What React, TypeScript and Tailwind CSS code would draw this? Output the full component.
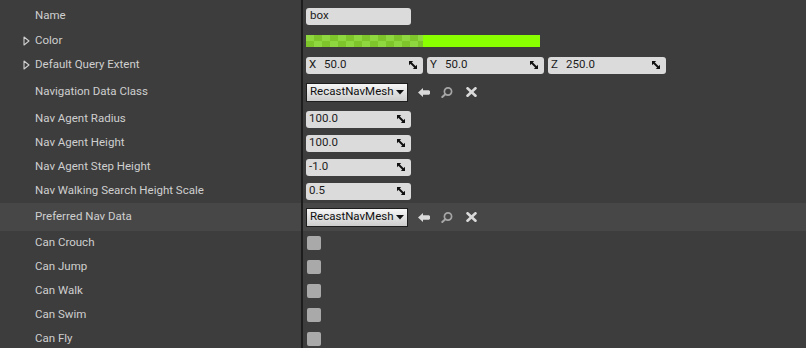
import type { ReactNode } from "react";

const font = { fontFamily: "Roboto, 'Noto Sans', sans-serif" };

function Expander() {
  return (
    <svg width="7" height="10" viewBox="0 0 7 10" className="absolute left-[23px]">
      <polygon points="1,1 6,5 1,9" fill="none" stroke="#cfcfcf" strokeWidth="1.1" strokeLinejoin="round" />
    </svg>
  );
}

function Row({
  label,
  h,
  expandable,
  highlight,
  children,
}: {
  label: string;
  h: string;
  expandable?: boolean;
  highlight?: boolean;
  children?: ReactNode;
}) {
  return (
    <div className={`flex ${h} ${highlight ? "bg-[#474747]" : ""}`}>
      <div className="relative flex w-[301px] shrink-0 items-center pl-[35px] text-[11.5px] text-[#cfcfcf]">
        {expandable && <Expander />}
        {label}
      </div>
      <div className="w-[2px] shrink-0 bg-[#1d1d1d]" />
      <div className="flex flex-1 items-center pl-[3px]">{children}</div>
    </div>
  );
}

function Spin() {
  return (
    <svg width="8" height="8" viewBox="0 0 8 8" className="shrink-0">
      <polygon points="0,0 4.2,0 0,4.2" fill="#111" />
      <polygon points="8,8 8,3.8 3.8,8" fill="#111" />
      <line x1="1" y1="1" x2="7" y2="7" stroke="#111" strokeWidth="2" />
    </svg>
  );
}

function NumField({ value, label, w = "w-[105px]" }: { value: string; label?: string; w?: string }) {
  return (
    <div className={`flex h-[17px] ${w} items-center rounded-[3px] bg-[#dbdbdb] pl-[3px] pr-[6px] text-[11.5px] text-[#1b1b1b]`}>
      {label && <span className="w-[15px]">{label}</span>}
      <span className="flex-1">{value}</span>
      <Spin />
    </div>
  );
}

function ObjectPicker() {
  return (
    <div className="flex items-center">
      <div className="flex h-[19px] w-[102px] items-center border border-[#1e1e1e] bg-gradient-to-b from-[#f6f6f6] to-[#cdcdcd] pl-[3px] pr-[3px] text-[11.5px] text-[#111]">
        <span className="flex-1">RecastNavMesh</span>
        <svg width="8" height="5" viewBox="0 0 8 5">
          <polygon points="0,0 8,0 4,4.5" fill="#111" />
        </svg>
      </div>
      <svg width="12" height="9" viewBox="0 0 12 9" className="ml-[10px]">
        <polygon points="0,4.5 5,0 5,2.3 11,2.3 12,3.3 12,5.7 11,6.7 5,6.7 5,9" fill="#dadada" />
      </svg>
      <svg width="12" height="11" viewBox="0 0 12 11" className="ml-[11px]">
        <circle cx="7" cy="4.5" r="3.6" fill="none" stroke="#a6a6a6" strokeWidth="1.7" />
        <line x1="4.3" y1="7.2" x2="1.3" y2="10" stroke="#a6a6a6" strokeWidth="2" strokeLinecap="round" />
      </svg>
      <svg width="11" height="10" viewBox="0 0 11 10" className="ml-[13px]">
        <line x1="1.5" y1="1.3" x2="9.5" y2="8.7" stroke="#dadada" strokeWidth="2.6" strokeLinecap="round" />
        <line x1="9.5" y1="1.3" x2="1.5" y2="8.7" stroke="#dadada" strokeWidth="2.6" strokeLinecap="round" />
      </svg>
    </div>
  );
}

function Check() {
  return <div className="ml-[1px] h-[14px] w-[14px] rounded-[2px] bg-[#a9a9a9]" />;
}

export default function App() {
  return (
    <div className="h-[348px] w-[806px] overflow-hidden bg-[#3d3d3d]" style={font}>
      <div className="flex h-[4px]">
        <div className="w-[301px]" />
        <div className="w-[2px] bg-[#1d1d1d]" />
      </div>
      <Row label="Name" h="h-[24px]">
        <div className="flex h-[17px] w-[105px] items-center rounded-[3px] bg-[#dbdbdb] pl-[4px] text-[11.5px] text-[#1b1b1b]">
          box
        </div>
      </Row>
      <Row label="Color" h="h-[25px]" expandable>
        <div className="flex h-[12px] w-[234px]">
          <div className="grid h-full w-[117px] grid-cols-[repeat(15,8px)] grid-rows-2 overflow-hidden">
            {Array.from({ length: 30 }).map((_, i) => {
              const r = Math.floor(i / 15);
              const c = i % 15;
              return (
                <div key={i} className={(r + c) % 2 === 0 ? "bg-[#8fd73e]" : "bg-[#7dc52b]"} />
              );
            })}
          </div>
          <div className="flex-1 bg-[#8aff00]" />
        </div>
      </Row>
      <Row label="Default Query Extent" h="h-[24px]" expandable>
        <div className="flex gap-[4px]">
          <NumField label="X" value="50.0" w="w-[117px]" />
          <NumField label="Y" value="50.0" w="w-[117px]" />
          <NumField label="Z" value="250.0" w="w-[118px]" />
        </div>
      </Row>
      <Row label="Navigation Data Class" h="h-[30px]">
        <ObjectPicker />
      </Row>
      <Row label="Nav Agent Radius" h="h-[24px]">
        <NumField value="100.0" />
      </Row>
      <Row label="Nav Agent Height" h="h-[24px]">
        <NumField value="100.0" />
      </Row>
      <Row label="Nav Agent Step Height" h="h-[24px]">
        <NumField value="-1.0" />
      </Row>
      <Row label="Nav Walking Search Height Scale" h="h-[24px]">
        <NumField value="0.5" />
      </Row>
      <Row label="Preferred Nav Data" h="h-[28px]" highlight>
        <ObjectPicker />
      </Row>
      <Row label="Can Crouch" h="h-[24px]">
        <Check />
      </Row>
      <Row label="Can Jump" h="h-[24px]">
        <Check />
      </Row>
      <Row label="Can Walk" h="h-[24px]">
        <Check />
      </Row>
      <Row label="Can Swim" h="h-[24px]">
        <Check />
      </Row>
      <Row label="Can Fly" h="h-[24px]">
        <Check />
      </Row>
    </div>
  );
}
